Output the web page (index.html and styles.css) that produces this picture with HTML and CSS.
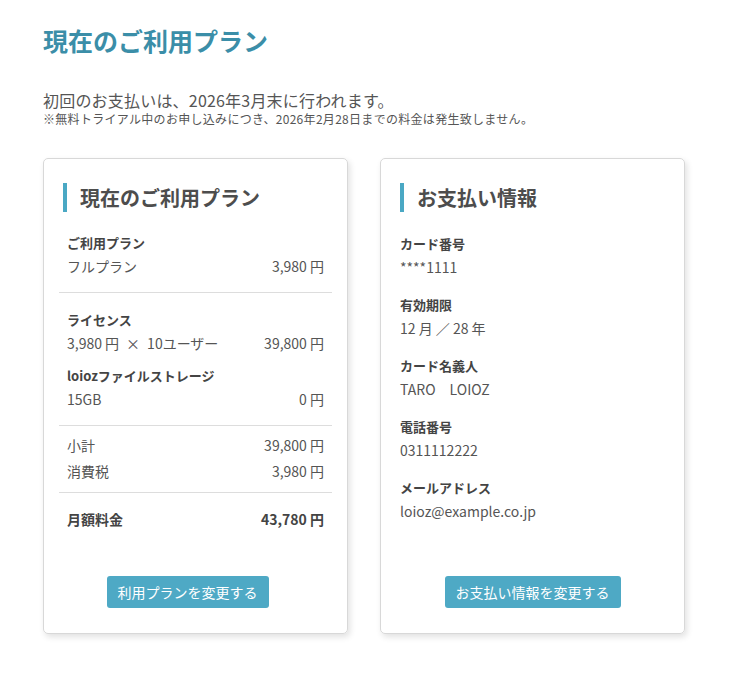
FILE: index.html
```html
<!DOCTYPE html>
<html lang="ja">
    <head>
        <meta charset="utf-8">
        <link rel="stylesheet" href="styles.css">
    </head>
    <body>
        <h1 class="page-title">現在のご利用プラン</h1>
        <p class="lead">初回のお支払いは、2026年3月末に行われます。</p>
        <p class="note">※無料トライアル中のお申し込みにつき、2026年2月28日までの料金は発生致しません。</p>

        <div class="cards">
            <div class="card">
                <h2 class="card-title">現在のご利用プラン</h2>
                <div class="plan">
                    <div class="section first">
                        <div class="label">ご利用プラン</div>
                        <div class="row"><span>フルプラン</span><span>3,980 円</span></div>
                    </div>
                    <div class="section second">
                        <div class="label">ライセンス</div>
                        <div class="row"><span>3,980 円&ensp;×&ensp;10ユーザー</span><span>39,800 円</span></div>
                        <div class="label spaced">loiozファイルストレージ</div>
                        <div class="row"><span>15GB</span><span>0 円</span></div>
                    </div>
                    <div class="section sums">
                        <div class="row tall"><span>小計</span><span>39,800 円</span></div>
                        <div class="row tall"><span>消費税</span><span>3,980 円</span></div>
                    </div>
                    <div class="section total">
                        <div class="row"><span>月額料金</span><span>43,780 円</span></div>
                    </div>
                </div>
                <div class="card-footer shifted">
                    <div class="button">利用プランを変更する</div>
                </div>
            </div>

            <div class="card">
                <h2 class="card-title">お支払い情報</h2>
                <div class="info">
                    <div class="field">
                        <div class="label">カード番号</div>
                        <div class="value">****1111</div>
                    </div>
                    <div class="field">
                        <div class="label">有効期限</div>
                        <div class="value">12 月 ／ 28 年</div>
                    </div>
                    <div class="field">
                        <div class="label">カード名義人</div>
                        <div class="value">TARO&emsp;LOIOZ</div>
                    </div>
                    <div class="field">
                        <div class="label">電話番号</div>
                        <div class="value">0311112222</div>
                    </div>
                    <div class="field">
                        <div class="label">メールアドレス</div>
                        <div class="value">loioz@example.co.jp</div>
                    </div>
                </div>
                <div class="card-footer">
                    <div class="button">お支払い情報を変更する</div>
                </div>
            </div>
        </div>
    </body>
</html>
```

FILE: styles.css
```css
html, body {
    margin: 0;
    font-family: "Noto Sans CJK JP", "Noto Sans", sans-serif;
    color: #555555;
    background-color: #FFFFFF;
}

body {
    padding: 22px 0 40px 43px;
}

.page-title {
    margin: 0;
    font-size: 25px;
    line-height: 36px;
    font-weight: bold;
    color: #3B8EA8;
}

.lead {
    margin: 31px 0 0;
    font-size: 16px;
    line-height: 22px;
    letter-spacing: 0.2px;
}

.note {
    margin: 0;
    font-size: 12px;
    line-height: 16px;
    letter-spacing: 0.3px;
}

.cards {
    display: flex;
    gap: 32px;
    margin-top: 31px;
    align-items: stretch;
}

.card {
    width: 305px;
    box-sizing: border-box;
    display: flex;
    flex-direction: column;
    padding: 15px 15px 25px;
    border: 1px solid #D8D8D8;
    border-radius: 5px;
    box-shadow: 2px 3px 6px rgba(0,0,0,0.12);
}

.card-title {
    margin: 9px 0 0 4px;
    padding-left: 13px;
    border-left: 4px solid #4AA8C4;
    font-size: 20px;
    line-height: 29px;
    font-weight: bold;
    color: #4D4D4D;
}

.label {
    font-size: 13px;
    line-height: 22px;
    font-weight: bold;
    color: #444444;
}

.row {
    display: flex;
    justify-content: space-between;
    font-size: 14px;
    line-height: 24px;
}

.section {
    padding: 0 8px;
    border-bottom: 1px solid #DDDDDD;
}

.section.first {
    padding-top: 20px;
    padding-bottom: 14px;
}

.section.second {
    padding-top: 16px;
    padding-bottom: 14px;
}

.label.spaced {
    margin-top: 10px;
}

.section.sums {
    padding-top: 6px;
    padding-bottom: 8px;
}

.row.tall {
    line-height: 26px;
}

.section.total {
    border-bottom: none;
    padding-top: 14px;
}

.section.total .row {
    font-weight: bold;
    color: #444444;
}

.info {
    padding: 21px 4px 0;
}

.field {
    margin-bottom: 15px;
}

.value {
    font-size: 14px;
    line-height: 24px;
}

.card-footer {
    margin-top: auto;
    padding-top: 38px;
    display: flex;
    justify-content: center;
}

.card-footer.shifted {
    padding-right: 16px;
}

.button {
    background-color: #4EA9C5;
    color: #FFFFFF;
    font-size: 14px;
    line-height: 32px;
    padding: 0 11px;
    border-radius: 3px;
    cursor: pointer;
}
```
